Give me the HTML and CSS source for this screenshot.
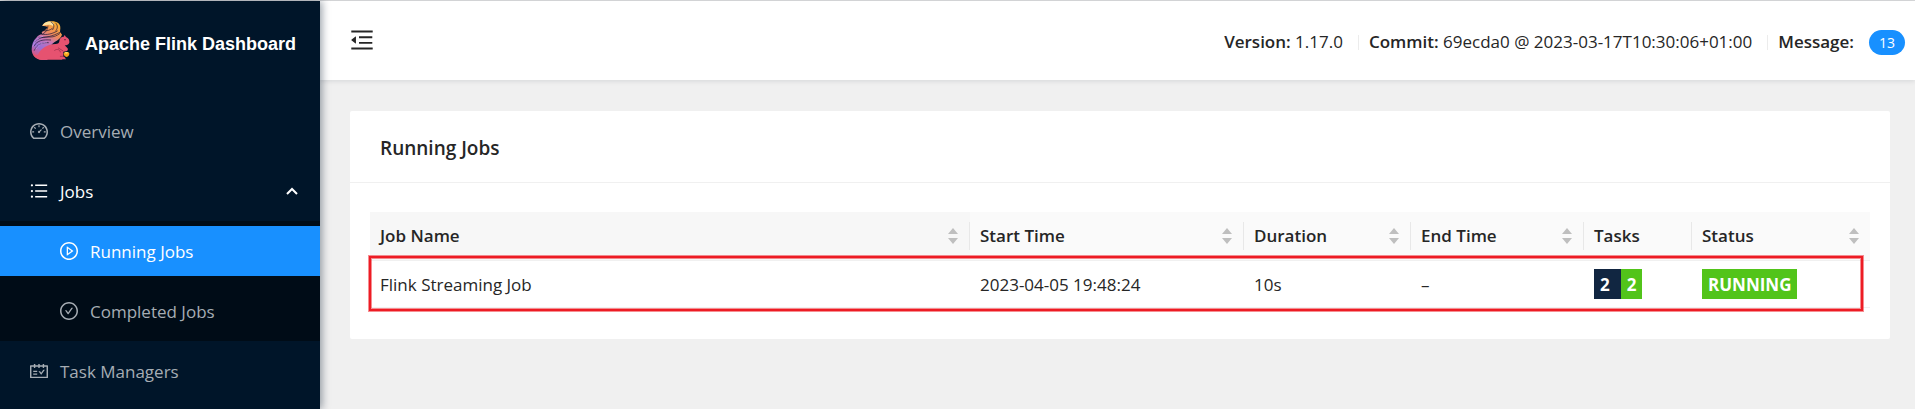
FILE: index.html
```html
<!DOCTYPE html>
<html lang="en">
<head>
<meta charset="utf-8">
<meta name="viewport" content="width=device-width, initial-scale=1">
<title>Apache Flink Dashboard</title>
<link rel="stylesheet" href="styles.css">
</head>
<body>
<div class="app">
  <aside class="sidebar">
    <div class="brand">
      <svg class="brand-logo" viewBox="30 31 120 120" aria-hidden="true">
        <defs>
          <linearGradient id="tail" x1="0.7" y1="0" x2="0.25" y2="1">
            <stop offset="0" stop-color="#fbb034"/>
            <stop offset="0.28" stop-color="#f08a5a"/>
            <stop offset="0.48" stop-color="#c874b4"/>
            <stop offset="0.72" stop-color="#9a6fd8"/>
            <stop offset="1" stop-color="#e65270"/>
          </linearGradient>
        </defs>
        <path fill="url(#tail)" d="M67 46c3-9 14-14 28-14 16 0 27 7 26 21l-1 10 6 9c-3 9-11 16-22 22-10 6-16 15-16 28l-6 26H66c-18 0-31-14-31-32 0-14 5-27 14-35 5-6 10-10 18-11l-2-6c9-4 15-8 18-15-6-3-11-4-16-3z"/>
        <path fill="#fde3a0" d="M67 46c3-9 14-15 27-13 8 2 10 7 5 13-7-5-20-5-32 0z"/>
        <path fill="#e65270" d="M54 132c8-20 30-31 52-32 8 0 12-3 12-8 0-8 6-14 13-14l3-5 4 6c8 3 11 10 10 17-2 6-8 8-14 8l8 8c3 3 2 8-3 10l-9 1v18c0 4-3 6-7 6H70c-15 0-27-6-31-18 5 4 10 5 15 3z"/>
        <path fill="none" stroke="#1b1633" stroke-width="2" stroke-linecap="round" d="M93 34c10 5 11 14 5 23M107 37c8 8 6 17 0 24M71 60c11 2 20-2 26-7M64 70c16 5 36-2 48-9M57 80c20 2 40-3 65-16M45 94c9-13 27-16 46-15 11 0 20-4 28-10M42 106c9-17 28-20 50-18M43 119c9-18 24-25 42-23M84 46c0 10-7 19-16 25"/>
        <path fill="none" stroke="#c59bf0" stroke-width="2" d="M39 108c4-17 16-28 30-31M47 116c8-14 20-21 34-22"/>
        <path fill="none" stroke="#8f2947" stroke-width="2" stroke-linecap="round" d="M104 119c8-6 16-2 17 5M115 112l13 8M121 137h8"/>
        <circle cx="135" cy="87" r="2" fill="#35152b"/>
        <path fill="#f9a51b" d="M131 128c2-5 15-6 17 0 0 7-3 10-8 11-6-1-9-5-9-11z"/>
        <path fill="#ffe16a" d="M133 127c3-4 9-4 12-1l-5 3z"/>
        <path fill="#e65270" d="M126 139l7-1 5 8h-10z"/>
      </svg>
      <h1 class="brand-name">Apache Flink Dashboard</h1>
    </div>
    <nav class="menu" aria-label="Main">
      <a class="menu-item" href="#overview">
        <svg class="icon" viewBox="64 64 896 896" aria-hidden="true"><path d="M924.8 385.6a446.7 446.7 0 00-96-142.4 446.7 446.7 0 00-142.4-96C631.1 123.8 572.5 112 512 112s-119.1 11.8-174.4 35.2a446.7 446.7 0 00-142.4 96 446.7 446.7 0 00-96 142.4C75.8 440.9 64 499.5 64 560c0 132.7 58.3 257.7 159.9 343.1l1.7 1.4c5.8 4.8 13.1 7.5 20.6 7.5h531.7c7.5 0 14.8-2.7 20.6-7.5l1.7-1.4C901.7 817.7 960 692.7 960 560c0-60.5-11.9-119.1-35.2-174.4zM761.4 836H262.6A371.12 371.12 0 01140 560c0-99.4 38.7-192.8 109-263 70.3-70.3 163.7-109 263-109 99.4 0 192.8 38.7 263 109 70.3 70.3 109 163.7 109 263 0 105.6-44.5 205.5-122.6 276zM623.5 421.5a8.03 8.03 0 00-11.3 0L527.7 506c-18.7-5-39.4-.2-54.1 14.5a55.95 55.95 0 000 79.2 55.95 55.95 0 0079.2 0 55.87 55.87 0 0014.5-54.1l84.5-84.5c3.1-3.1 3.1-8.2 0-11.3l-28.3-28.3zM490 320h44c4.4 0 8-3.6 8-8v-80c0-4.4-3.6-8-8-8h-44c-4.4 0-8 3.6-8 8v80c0 4.4 3.6 8 8 8zm260 218v44c0 4.4 3.6 8 8 8h80c4.4 0 8-3.6 8-8v-44c0-4.4-3.6-8-8-8h-80c-4.4 0-8 3.6-8 8zm12.7-197.2l-31.1-31.1a8.03 8.03 0 00-11.3 0l-56.6 56.6a8.03 8.03 0 000 11.3l31.1 31.1c3.1 3.1 8.2 3.1 11.3 0l56.6-56.6c3.1-3.1 3.1-8.2 0-11.3zm-458.6-31.1a8.03 8.03 0 00-11.3 0l-31.1 31.1a8.03 8.03 0 000 11.3l56.6 56.6c3.1 3.1 8.2 3.1 11.3 0l31.1-31.1c3.1-3.1 3.1-8.2 0-11.3l-56.6-56.6zM262 530h-80c-4.4 0-8 3.6-8 8v44c0 4.4 3.6 8 8 8h80c4.4 0 8-3.6 8-8v-44c0-4.4-3.6-8-8-8z"/></svg>
        <span class="menu-label">Overview</span>
      </a>
      <button class="menu-item menu-item-open" type="button" aria-expanded="true">
        <svg class="icon" viewBox="64 64 896 896" aria-hidden="true"><path d="M912 192H328c-4.400 0-8 3.600-8 8v56c0 4.400 3.600 8 8 8h584c4.400 0 8-3.600 8-8v-56c0-4.400-3.600-8-8-8zm0 284H328c-4.400 0-8 3.600-8 8v56c0 4.400 3.600 8 8 8h584c4.400 0 8-3.600 8-8v-56c0-4.400-3.600-8-8-8zm0 284H328c-4.400 0-8 3.600-8 8v56c0 4.400 3.600 8 8 8h584c4.400 0 8-3.600 8-8v-56c0-4.400-3.600-8-8-8zM104 228a56 56 0 10112 0 56 56 0 10-112 0zm0 284a56 56 0 10112 0 56 56 0 10-112 0zm0 284a56 56 0 10112 0 56 56 0 10-112 0z"/></svg>
        <span class="menu-label">Jobs</span>
        <svg class="chevron" viewBox="0 0 12 8" aria-hidden="true"><path d="M1 7l5-5 5 5"/></svg>
      </button>
      <div class="submenu">
        <a class="menu-item menu-item-nested menu-item-selected" href="#running" aria-current="page">
          <svg class="icon" viewBox="64 64 896 896" aria-hidden="true"><path d="M512 64C264.600 64 64 264.600 64 512s200.600 448 448 448 448-200.600 448-448S759.400 64 512 64zm0 820c-205.400 0-372-166.600-372-372s166.600-372 372-372 372 166.600 372 372-166.600 372-372 372z"/><path d="M719.400 499.100l-296.100-215A15.900 15.900 0 00398 297v430c0 13.100 14.800 20.500 25.300 12.900l296.100-215a15.900 15.900 0 000-25.800zm-257.600 134V390.900L628.500 512 461.800 633.100z"/></svg>
          <span class="menu-label">Running Jobs</span>
        </a>
        <a class="menu-item menu-item-nested" href="#completed">
          <svg class="icon" viewBox="64 64 896 896" aria-hidden="true"><path d="M699 353h-46.900c-10.200 0-19.900 4.900-25.900 13.300L469 584.300l-71.200-98.800c-6-8.300-15.600-13.300-25.900-13.300H325c-6.500 0-10.300 7.400-6.500 12.700l124.600 172.800a31.800 31.800 0 0051.700 0l210.600-292c3.900-5.300.1-12.700-6.400-12.700z"/><path d="M512 64C264.600 64 64 264.600 64 512s200.600 448 448 448 448-200.600 448-448S759.400 64 512 64zm0 820c-205.400 0-372-166.600-372-372s166.600-372 372-372 372 166.600 372 372-166.600 372-372 372z"/></svg>
          <span class="menu-label">Completed Jobs</span>
        </a>
      </div>
      <a class="menu-item" href="#task-managers">
        <svg class="icon" viewBox="64 64 896 896" aria-hidden="true"><path d="M928 224H768v-56c0-4.400-3.600-8-8-8h-56c-4.400 0-8 3.600-8 8v56H548v-56c0-4.400-3.600-8-8-8h-56c-4.400 0-8 3.600-8 8v56H328v-56c0-4.400-3.600-8-8-8h-56c-4.400 0-8 3.600-8 8v56H96c-17.700 0-32 14.300-32 32v576c0 17.700 14.300 32 32 32h832c17.700 0 32-14.300 32-32V256c0-17.700-14.300-32-32-32zm-40 568H136V296h120v56c0 4.400 3.600 8 8 8h56c4.400 0 8-3.600 8-8v-56h148v56c0 4.400 3.600 8 8 8h56c4.400 0 8-3.600 8-8v-56h148v56c0 4.400 3.600 8 8 8h56c4.400 0 8-3.600 8-8v-56h120v496zM416 496H232c-4.400 0-8 3.600-8 8v48c0 4.400 3.600 8 8 8h184c4.400 0 8-3.600 8-8v-48c0-4.400-3.600-8-8-8zm0 136H232c-4.400 0-8 3.600-8 8v48c0 4.400 3.600 8 8 8h184c4.400 0 8-3.600 8-8v-48c0-4.400-3.600-8-8-8zm308.200-177.400L620.600 598.300l-52.800-73.100c-3-4.200-7.800-6.600-12.900-6.600H500c-6.500 0-10.300 7.400-6.500 12.700l114.100 158.200a15.900 15.900 0 0025.800 0l165.100-228.900c3.800-5.300 0-12.700-6.500-12.700H737c-5-.1-9.800 2.400-12.800 6.700z"/></svg>
        <span class="menu-label">Task Managers</span>
      </a>
    </nav>
  </aside>

  <div class="page">
    <header class="topbar">
      <button class="fold" type="button" aria-label="Collapse menu">
        <svg class="fold-icon" viewBox="64 64 896 896" aria-hidden="true"><path d="M408 442h480c4.400 0 8-3.600 8-8v-56c0-4.400-3.600-8-8-8H408c-4.400 0-8 3.600-8 8v56c0 4.400 3.600 8 8 8zm-8 204c0 4.400 3.600 8 8 8h480c4.400 0 8-3.600 8-8v-56c0-4.400-3.600-8-8-8H408c-4.400 0-8 3.600-8 8v56zm504-486H120c-4.400 0-8 3.600-8 8v56c0 4.400 3.600 8 8 8h784c4.400 0 8-3.600 8-8v-56c0-4.400-3.600-8-8-8zm0 632H120c-4.400 0-8 3.600-8 8v56c0 4.400 3.600 8 8 8h784c4.400 0 8-3.600 8-8v-56c0-4.400-3.600-8-8-8zM115.400 518.900L271.700 642c5.800 4.600 14.400.5 14.400-6.900V388.900c0-7.400-8.500-11.500-14.400-6.900L115.400 505.100a8.740 8.740 0 000 13.800z"/></svg>
      </button>
      <div class="info">
        <span><strong>Version:</strong> 1.17.0</span>
        <span class="divider"></span>
        <span><strong>Commit:</strong> 69ecda0 @ 2023-03-17T10:30:06+01:00</span>
        <span class="divider"></span>
        <span class="message"><strong>Message:</strong> <span class="badge">13</span></span>
      </div>
    </header>

    <main class="content">
      <section class="card">
        <h2 class="card-title">Running Jobs</h2>
        <div class="card-body">
          <table class="jobs">
            <colgroup>
              <col><col class="col-start"><col class="col-duration"><col class="col-end"><col class="col-tasks"><col class="col-status">
            </colgroup>
            <thead>
              <tr>
                <th class="hovered" scope="col"><button class="sort" type="button">Job Name<svg class="sorter" viewBox="0 0 10 16" aria-hidden="true"><path d="M5 0l5 6H0zM0 10h10l-5 6z"/></svg></button></th>
                <th scope="col"><button class="sort" type="button">Start Time<svg class="sorter" viewBox="0 0 10 16" aria-hidden="true"><path d="M5 0l5 6H0zM0 10h10l-5 6z"/></svg></button></th>
                <th scope="col"><button class="sort" type="button">Duration<svg class="sorter" viewBox="0 0 10 16" aria-hidden="true"><path d="M5 0l5 6H0zM0 10h10l-5 6z"/></svg></button></th>
                <th scope="col"><button class="sort" type="button">End Time<svg class="sorter" viewBox="0 0 10 16" aria-hidden="true"><path d="M5 0l5 6H0zM0 10h10l-5 6z"/></svg></button></th>
                <th scope="col"><span class="sort">Tasks</span></th>
                <th scope="col"><button class="sort" type="button">Status<svg class="sorter" viewBox="0 0 10 16" aria-hidden="true"><path d="M5 0l5 6H0zM0 10h10l-5 6z"/></svg></button></th>
              </tr>
            </thead>
            <tbody>
              <tr class="marked">
                <td>Flink Streaming Job</td>
                <td>2023-04-05 19:48:24</td>
                <td>10s</td>
                <td>–</td>
                <td><span class="tags"><span class="tag tag-total">2</span><span class="tag tag-running">2</span></span></td>
                <td><span class="tags"><span class="tag tag-running">RUNNING</span></span></td>
              </tr>
            </tbody>
          </table>
        </div>
      </section>
    </main>
  </div>
</div>
</body>
</html>
```

FILE: styles.css
```css
* {
  box-sizing: border-box;
}

body {
  margin: 0;
  background: #f0f0f0;
  color: #262626;
  font: 17px/28px "Segoe UI", "Open Sans", "Noto Sans", sans-serif;
}

button {
  margin: 0;
  padding: 0;
  border: 0;
  background: none;
  color: inherit;
  font: inherit;
  text-align: left;
  cursor: pointer;
}

.app {
  display: flex;
  min-height: 100vh;
  border-top: 1px solid #d9dadb;
}

/* Sidebar */

.sidebar {
  position: relative;
  z-index: 2;
  flex: 0 0 320px;
  min-width: 0;
  background: #001529;
  box-shadow: 2px 0 8px rgba(0, 21, 41, 0.4);
}

.brand {
  display: flex;
  align-items: center;
  gap: 15px;
  height: 80px;
  padding: 0 20px 0 30px;
}

.brand-logo {
  flex: none;
  width: 40px;
  height: 40px;
}

.brand-name {
  margin: 0;
  padding-top: 6px;
  color: #fff;
  font: bold 18px/28px "Liberation Sans", Arial, sans-serif;
  white-space: nowrap;
}

.menu {
  display: flex;
  flex-direction: column;
  gap: 10px;
  padding: 25px 0 12px;
}

.menu-item {
  display: flex;
  align-items: center;
  gap: 12px;
  height: 50px;
  padding: 0 22px 0 30px;
  color: #a6adb4;
  text-decoration: none;
}

.menu-label {
  padding-top: 1px;
}

.menu-item-open,
.menu-item-selected {
  color: #fff;
}

.menu-item-nested {
  padding-left: 60px;
}

.menu-item-selected {
  background: #1890ff;
}

.submenu {
  display: flex;
  flex-direction: column;
  gap: 10px;
  margin: -5px 0;
  padding: 5px 0;
  background: #000c17;
}

.icon {
  width: 18px;
  height: 18px;
  fill: currentColor;
}

.chevron {
  width: 12px;
  height: 8px;
  margin-left: auto;
  fill: none;
  stroke: #fff;
  stroke-width: 2;
}

/* Top bar */

.page {
  flex: 1;
  min-width: 0;
}

.topbar {
  position: relative;
  z-index: 1;
  display: flex;
  align-items: center;
  justify-content: space-between;
  height: 79px;
  padding: 0 10px 0 30px;
  background: #fff;
  box-shadow: 0 1px 5px rgba(0, 21, 41, 0.12);
}

.fold {
  display: flex;
  padding-bottom: 2px;
}

.fold-icon {
  width: 24px;
  height: 24px;
  fill: #262626;
}

.info {
  display: flex;
  align-items: center;
  padding-top: 3px;
}

.info strong {
  font-weight: 600;
}

.divider {
  width: 1px;
  height: 15px;
  margin: 0 10px 0 15px;
  background: #ececec;
}

.message {
  display: flex;
  align-items: center;
  gap: 15px;
}

.badge {
  min-width: 36px;
  padding: 0 10px;
  border-radius: 13px;
  background: #1890ff;
  color: #fff;
  font-size: 14px;
  line-height: 25px;
  text-align: center;
}

/* Jobs card */

.content {
  padding: 31px 25px 30px 30px;
}

.card {
  border-radius: 2px;
  background: #fff;
}

.card-title {
  margin: 0;
  padding: 23px 30px 20px;
  border-bottom: 1px solid #f0f0f0;
  font-size: 19px;
  font-weight: 600;
  line-height: 28px;
}

.card-body {
  padding: 29px 20px 31px;
}

.jobs {
  width: 100%;
  border-collapse: separate;
  border-spacing: 0;
  table-layout: fixed;
}

.col-start { width: 274px; }
.col-duration { width: 167px; }
.col-end { width: 173px; }
.col-tasks { width: 108px; }
.col-status { width: 178px; }

.jobs th {
  padding: 10px 0;
  border-bottom: 1px solid #f0f0f0;
  background: #fafafa;
  font-weight: 600;
}

.jobs .hovered {
  background: #f7f7f7;
}

.sort {
  display: flex;
  align-items: center;
  justify-content: space-between;
  width: 100%;
  padding: 0 11px 0 10px;
  border-right: 1px solid #e8e8e8;
}

th:last-child .sort {
  border-right: 0;
}

.sorter {
  width: 10px;
  height: 16px;
  fill: #bfbfbf;
}

.jobs td {
  padding: 8px 10px;
  border-bottom: 1px solid #f0f0f0;
  vertical-align: bottom;
}

.marked {
  position: relative;
}

/* Highlight frame drawn over the whole row */
.marked td:first-child::after {
  content: "";
  position: absolute;
  inset: -5px 7px -3px -1px;
  border: 2px solid #ed1c24;
  box-shadow: 0 0 0 1px rgba(237, 28, 36, 0.5), inset 0 0 0 1px rgba(237, 28, 36, 0.5);
  pointer-events: none;
}

.tags {
  display: flex;
}

.tag {
  padding: 2px 6px 0;
  color: #fff;
  font-weight: 700;
}

.tag-total {
  padding-right: 11px;
  background: #112641;
}

.tag-running {
  background: #52c41a;
}
```
